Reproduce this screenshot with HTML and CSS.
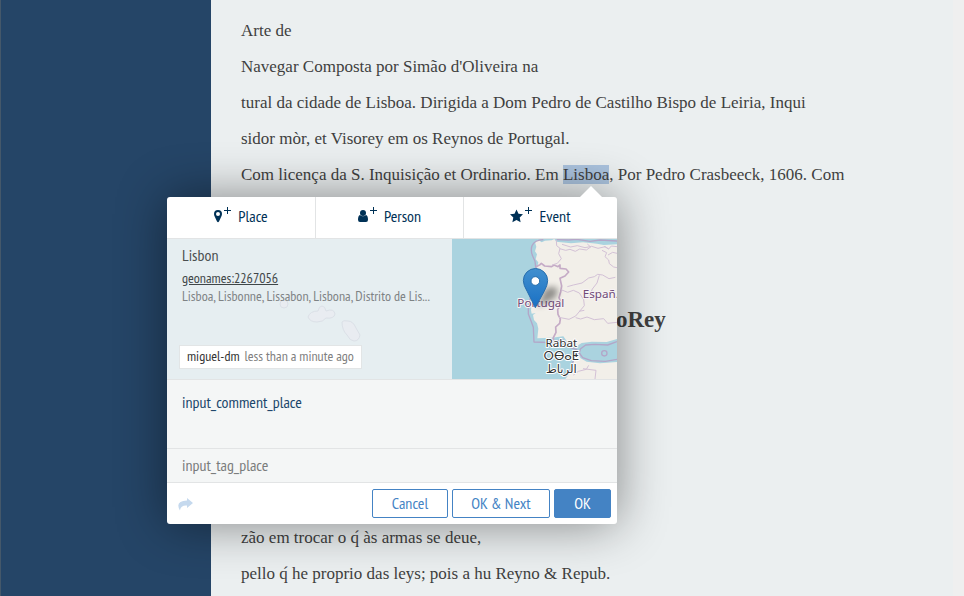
FILE: index.html
```html
<!DOCTYPE html>
<html lang="pt">
<head>
<meta charset="utf-8">
<meta name="viewport" content="width=device-width, initial-scale=1">
<title>Arte de Navegar</title>
<link rel="stylesheet" href="styles.css">
</head>
<body>
<div class="app">
  <aside class="sidebar"></aside>
  <main class="reader">
    <article class="document">
      <p>Arte de</p>
      <p>Navegar Composta por Simão d'Oliveira na</p>
      <p>tural da cidade de Lisboa. Dirigida a Dom Pedro de Castilho Bispo de Leiria, Inqui</p>
      <p>sidor mòr, et Visorey em os Reynos de Portugal.</p>
      <p>Com licença da S. Inquisição et Ordinario. Em <mark>Lisboa</mark>, Por Pedro Crasbeeck, 1606. Com</p>
      <h2>oRey</h2>
      <p>zão em trocar o q́ às armas se deue,</p>
      <p>pello q́ he proprio das leys; pois a hu Reyno &amp; Repub.</p>
    </article>

    <form class="editor">
      <div class="types">
        <button type="button"><svg width="24" height="17" viewBox="0 0 24 17"><path fill-rule="evenodd" d="M4 4a4 4 0 0 1 4 4c0 1.200-.4 2-.8 2.800L5 15.500q-1 1.400-2 0L.8 10.800C.4 10 0 9.200 0 8a4 4 0 0 1 4-4zm0 2a2 2 0 1 0 0 4 2 2 0 0 0 0-4z"/><path d="M13 1h1v3h3v1h-3v3h-1V5h-3V4h3z"/></svg>Place</button>
        <button type="button"><svg width="26" height="17" viewBox="0 0 26 17"><circle cx="5" cy="7" r="3"/><path d="M2 9q3 2.500 6 0 2 .8 2 4.700 0 2.300-2 2.300H2q-2 0-2-2.300Q0 9.800 2 9z"/><path d="M15 1h1v3h3v1h-3v3h-1V5h-3V4h3z"/></svg>Person</button>
        <button type="button"><svg width="29" height="17" viewBox="0 0 29 17"><path d="M6.500 3.500l2 4.200 4.500.6-3.300 3.200.9 4.700-4.100-2.300-4.100 2.300.9-4.700L0 8.300l4.500-.6z"/><path d="M18 1h1v3h3v1h-3v3h-1V5h-3V4h3z"/></svg>Event</button>
      </div>

      <section class="place">
        <svg class="islands" viewBox="0 0 86 44"><g fill="#e9ecf1" stroke="#dbe0e7"><circle cx="5" cy="6" r="4"/><path d="M29 19q2-6 10-6 1-5 4-5t4 5q8-3 9 3-1 5-9 4-3 4-9 4-7 0-9-5z"/><path d="M63 24q1-2 6-1 5 0 8 7l4 7q-1 6-6 6-4 0-7-6-5-5-5-13z"/></g></svg>
        <div class="details">
          <h3>Lisbon</h3>
          <a href="#geonames">geonames:2267056</a>
          <p>Lisboa, Lisbonne, Lissabon, Lisbona, Distrito de Lis...</p>
          <div class="stamp"><b>miguel-dm</b> less than a minute ago</div>
        </div>
        <svg class="map" viewBox="6 12 495 420" preserveAspectRatio="xMidYMid slice" role="img" aria-label="Map">
          <defs>
            <linearGradient id="pin" x2="0" y2="1"><stop offset="0" stop-color="#4290cf"/><stop offset="1" stop-color="#1970c4"/></linearGradient>
            <filter id="soft" x="-50%" y="-50%" width="200%" height="200%"><feGaussianBlur stdDeviation="9"/></filter>
          </defs>
          <path fill="#aad3df" d="M6 12h495v420H6z"/>
          <path fill="#f2efe9" d="M275 22l10-5 20-1 8-4 6 8 14 2 30 3 36-3 42 4 20 4 40-2v284l-31 9-45-1-30 4-20 13-17-8-18-25-35 4-43 2 3-29-4-16-9-10-3-15 8-6-12 2-2-10 5-46 10-47 2-29 5-22-8-9 4-15-6-9 4-14-4-13 9-8z"/>
          <path fill="#f2efe9" d="M346 432l14-18 15-45 7-14 10 15 18 10 40 5 51-4v51z"/>
          <g fill="none" stroke="#b3a6c8" stroke-width="4" stroke-linejoin="round">
            <path d="M280 14q-26 1-34 18-5 15 2 31l7 16 3 24-3 32-12 42-8 42v18l9 23 6 17 2 44 52 2 30-9 13 6 13 17 20 7q-4 22-12 38l-8 30"/>
            <path d="M320 14l35 1 25-2 40 6 30-4 51 3"/>
            <path d="M501 320l-28 10-38-2-28 2-16 12-3 12 10 14 26 9 42 2 35-6"/>
            <circle cx="463" cy="355" r="8"/>
          </g>
          <path fill="none" stroke="#c5abc6" stroke-width="5" stroke-linejoin="round" d="M258 95l12-6 4-4 10 8 21 2 7-5 12 5 6-5v10l18 2 8 9-11 12-15 7 5 23-3 18-5 17 7 18-11 18 1 14 7 14-2 13-12 11 1 16-8 16 1 14"/>
          <g fill="none" stroke="#d3c1d6" stroke-width="3" stroke-linejoin="round">
            <path d="M319 15l1 17 10 8-4 16 8 15-12 14-16 5M329 41l18 5 13-3 16 6 13-7 20 3 13-9-10-9M336 28l26 8 20-4 23 6 20-4 19 6 22-5 10 7M462 34l14 8 8-9 17 2M456 46l14 7-5 12 11 10 2 11 13 10 10 2M474 60l14-8 13 3"/>
            <path d="M333 164l20 8 17-6 18 8 13 20 2 18-16 19-10 12-20 10-30-6M352 155l18-5 26-6 20-15 17-4 10-7 15 2 19 11 19-4M448 121l-7 23-14 18-10 25M377 248l15 4 19-6 22 8 28-3 12 14 28-3M387 229l16-3M370 420l15-11 24-6 7-12M399 401l39 5-3 26"/>
          </g>
          <g class="country"><text x="202" y="215">Portugal</text><text x="398" y="188">Españ.</text></g>
          <g class="city"><text x="334" y="337">Rabat</text><text x="334" y="376">ⵔⴱⴰⵟ</text><text x="334" y="415">الرباط</text></g>
          <path d="M262 216l20-50q16-15 37-9 10 20-7 34z" fill="#000" opacity=".4" filter="url(#soft)"/>
          <path d="M256 218l-24-48q-12-20-12-33a36 36 0 0 1 73 0q0 13-11 33z" fill="url(#pin)" stroke="#2a6fad" stroke-width="3"/>
          <circle cx="256" cy="138" r="13" fill="#fff" stroke="#2a70ac" stroke-width="3"/>
        </svg>
      </section>

      <textarea class="comment" aria-label="Comment" placeholder="input_comment_place"></textarea>
      <input class="tag" type="text" aria-label="Tag" placeholder="input_tag_place">

      <div class="actions">
        <button type="button" class="reply" aria-label="Reply"><svg viewBox="0 0 15 13"><path d="M9 0l6 5-6 5V7.500Q2.500 7 2 12.500-3.500 3 9 2.500z"/></svg></button>
        <button type="button" class="btn">Cancel</button>
        <button type="button" class="btn next">OK &amp; Next</button>
        <button type="button" class="btn ok">OK</button>
      </div>
    </form>
  </main>
</div>
</body>
</html>
```
FILE: styles.css
```css
* { box-sizing: border-box; }
body { margin: 0; background: #ebeff0; }
button, input, textarea { font: inherit; margin: 0; }
.app { display: flex; min-height: 100vh; }
.sidebar { width: 211px; flex: none; background: #254567; border-left: 1px solid #45586a; }
.reader { position: relative; flex: 1; min-width: 0; border-right: 11px solid #efefef; }

.document {
  padding: 13px 30px 0;
  font: 17px/36px "Liberation Serif", serif;
  color: #3f3f3f;
  white-space: nowrap;
}
.document p { margin: 0; }
.document mark { background: #abc3de; color: inherit; }
.document h2 { margin: 107px 0 180px 375px; font-size: 23px; line-height: 40px; }

.editor {
  position: absolute;
  left: -44px;
  top: 197px;
  width: 450px;
  display: flex;
  flex-direction: column;
  background: #fff;
  border-radius: 3px;
  box-shadow: 0 0 50px rgba(0, 0, 0, .45);
  font: 16px/20px "PT Sans Narrow", "Liberation Sans Narrow", "Liberation Sans", sans-serif;
  color: #003156;
}
.editor::before {
  content: "";
  position: absolute;
  right: 15px;
  top: -11px;
  border: 11px solid transparent;
  border-top: 0;
  border-bottom-color: #fff;
}

.types { display: grid; grid-template-columns: 148px 148px 1fr; }
.types button {
  display: flex;
  align-items: center;
  justify-content: center;
  height: 41px;
  padding: 0 0 4px;
  border: 0;
  background: none;
  color: inherit;
}
.types button + button { border-left: 1px solid #e2e4e5; }
.types svg { margin-bottom: 3px; fill: currentColor; }

.place {
  position: relative;
  display: flex;
  height: 142px;
  border: solid #e2e4e5;
  border-width: 1px 0;
  background: #e6eef1;
}
.details {
  position: relative;
  flex: 1;
  min-width: 0;
  padding: 6px 15px 8px;
  display: flex;
  flex-direction: column;
  align-items: flex-start;
  font-size: 14px;
  line-height: 18px;
}
.details h3 { margin: 0 0 4px; font-size: 16px; line-height: 20px; font-weight: normal; color: #4a4e50; }
.details a { color: #3f4648; }
.details p { margin: 0; white-space: nowrap; color: #7e8385; }
.stamp { margin: auto 0 2px -3px; padding: 1px 7px 3px; border: 1px solid #e2e5e6; background: #fff; color: #808080; white-space: nowrap; }
.stamp b { font-weight: normal; color: #333; margin-right: 2px; }
.islands { position: absolute; left: 112px; top: 59px; width: 86px; height: 44px; }
.map { width: 165px; height: 140px; flex: none; }
.map text { paint-order: stroke; stroke: #fff; stroke-width: 6px; stroke-linejoin: round; font-family: "Noto Sans", "DejaVu Sans", sans-serif; font-size: 35px; }
.country text { fill: #704b78; stroke: #f7f3f4; }
.city text { fill: #333; text-anchor: middle; }

.comment, .tag {
  display: block;
  width: 100%;
  padding: 12px 15px;
  border: 0;
  border-bottom: 1px solid #e2e4e5;
  border-radius: 0;
  background: #f4f6f6;
  color: inherit;
  resize: none;
  outline: 0;
}
.comment { height: 69px; }
.comment::placeholder { color: #1a466b; opacity: 1; }
.tag { height: 34px; padding: 0 15px 2px; }
.tag::placeholder { color: #7a7c7c; opacity: 1; }

.actions { display: flex; gap: 4px; align-items: center; padding: 6px; height: 41px; }
.reply { margin-right: auto; padding: 6px 5px 4px; border: 0; background: none; line-height: 0; }
.reply svg { width: 15px; height: 13px; fill: #c5d9ee; }
.btn { height: 29px; width: 76px; padding: 0 0 2px; border: 1px solid #4483c4; border-radius: 2px; background: #fff; color: #4483c4; }
.next { width: 98px; }
.ok { width: 57px; background: #4483c4; color: #fff; }
```
